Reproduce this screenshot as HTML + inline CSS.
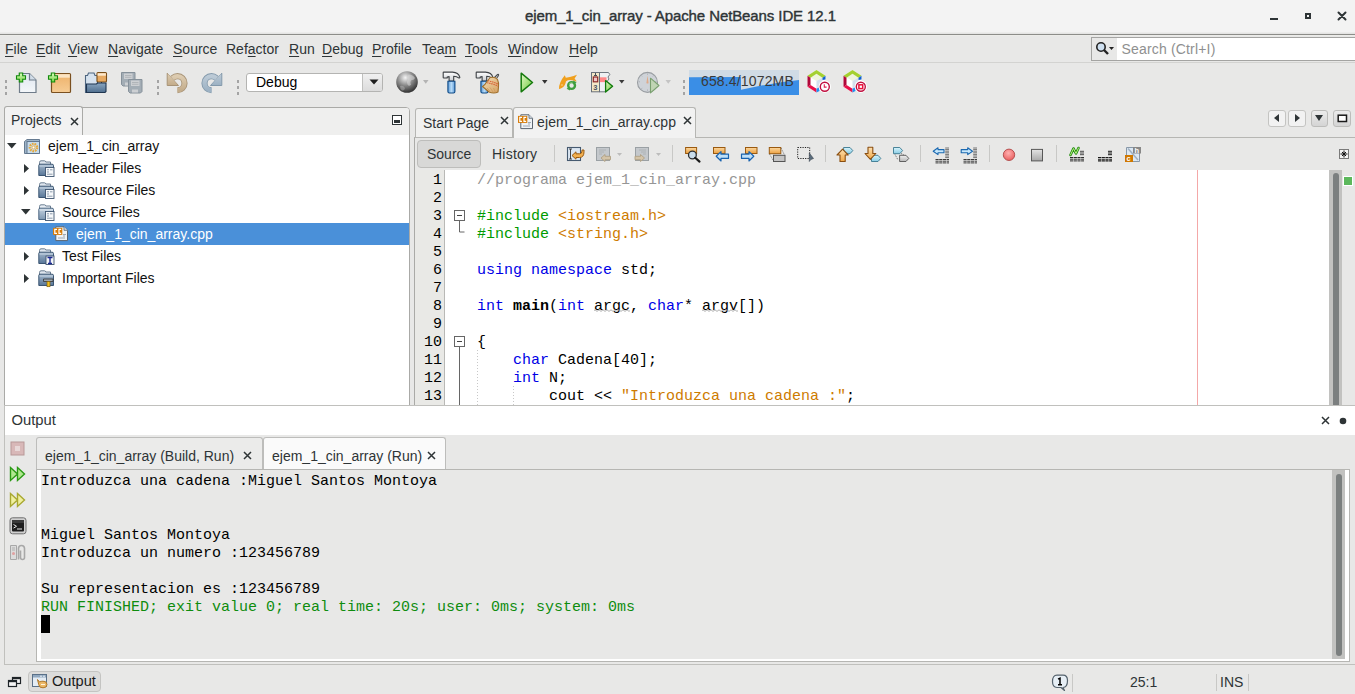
<!DOCTYPE html>
<html><head><meta charset="utf-8">
<style>
*{box-sizing:border-box}
html,body{margin:0;padding:0;width:1355px;height:694px;overflow:hidden;background:#e8e8e7;font-family:"Liberation Sans",sans-serif;color:#2e3436;position:relative}
.a{position:absolute;white-space:pre}
.mono{font-family:"Liberation Mono",monospace}
svg{position:absolute;overflow:visible}
#title{left:0;top:0;width:1355px;height:36px;background:linear-gradient(#f3f3f3 0 32px,#ececeb 32px 33px,#e4e4e3 33px 34px,#8c8d89 34px 35px,#ecece9 35px 36px)}
.menu{top:39px;font-size:14px;line-height:20px;color:#2e3436}
.u{text-decoration:underline;text-underline-offset:2px}
.tree{font-size:14px;line-height:22px;color:#111}
.code{font-family:"Liberation Mono",monospace;font-size:15px;line-height:18px;color:#000}
.ln{font-family:"Liberation Mono",monospace;font-size:15px;line-height:18px;color:#000;text-align:right;width:30px;left:412px}
.kw{color:#0000e6}.pp{color:#009b00}.st{color:#ce7b00}.cm{color:#969696}
.out{font-family:"Liberation Mono",monospace;font-size:15px;line-height:18px;color:#000}
.sep{width:1px;background:#c8c8c6}
.dots{width:2px;background:repeating-linear-gradient(#a4a4a4 0 3px,transparent 3px 6px)}
</style></head><body>
<!-- ===== title bar ===== -->
<div class="a" id="title"></div>
<div class="a" style="left:525px;top:6.5px;font-size:15px;line-height:18px;color:#2e3436;letter-spacing:-0.1px;-webkit-text-stroke:0.4px #2e3436">ejem_1_cin_array - Apache NetBeans IDE 12.1</div>
<svg style="left:1268px;top:10px" width="12" height="12"><rect x="2" y="8" width="8" height="2" fill="#2e3436"/></svg>
<svg style="left:1303px;top:11px" width="10" height="10"><rect x="3" y="3" width="4" height="4" fill="none" stroke="#2e3436" stroke-width="2"/></svg>
<svg style="left:1336px;top:10px" width="12" height="12"><path d="M2.5 2.5L9.5 9.5M9.5 2.5L2.5 9.5" stroke="#2e3436" stroke-width="2" stroke-linecap="round"/></svg>

<!-- ===== menu ===== -->
<div class="a menu" style="left:5px"><span class="u">F</span>ile</div>
<div class="a menu" style="left:36px"><span class="u">E</span>dit</div>
<div class="a menu" style="left:68px"><span class="u">V</span>iew</div>
<div class="a menu" style="left:108px"><span class="u">N</span>avigate</div>
<div class="a menu" style="left:173px"><span class="u">S</span>ource</div>
<div class="a menu" style="left:226px">Ref<span class="u">a</span>ctor</div>
<div class="a menu" style="left:289px"><span class="u">R</span>un</div>
<div class="a menu" style="left:322px"><span class="u">D</span>ebug</div>
<div class="a menu" style="left:372px"><span class="u">P</span>rofile</div>
<div class="a menu" style="left:422px">Tea<span class="u">m</span></div>
<div class="a menu" style="left:465px"><span class="u">T</span>ools</div>
<div class="a menu" style="left:508px"><span class="u">W</span>indow</div>
<div class="a menu" style="left:569px"><span class="u">H</span>elp</div>
<!-- search -->
<div class="a" style="left:1091px;top:37px;width:270px;height:24px;background:#fff;border:1px solid #a4a4a2"></div>
<div class="a" style="left:1092px;top:38px;width:25px;height:22px;background:#e8e8e7"></div>
<svg style="left:1095px;top:41px" width="22" height="16"><circle cx="6" cy="6" r="4.2" fill="#cfe0f0" stroke="#222" stroke-width="1.6"/><path d="M9 9L13 13" stroke="#222" stroke-width="2.4"/><path d="M14 6h5l-2.5 3z" fill="#222"/></svg>
<div class="a" style="left:1121.5px;top:40px;font-size:14px;line-height:18px;color:#8f9090;letter-spacing:0.17px">Search (Ctrl+I)</div>
<div class="a" style="left:0;top:62px;width:1355px;height:1px;background:#d3d3d1"></div>

<!-- ===== toolbar ===== -->
<div class="a dots" style="left:5px;top:80px;height:15px"></div>
<svg style="left:0;top:0" width="0" height="0"><defs>
<linearGradient id="gPlus" x1="0" y1="0" x2="0" y2="1"><stop offset="0" stop-color="#e0ffc0"/><stop offset="1" stop-color="#70d040"/></linearGradient>
<linearGradient id="gDoc" x1="0" y1="0" x2="0" y2="1"><stop offset="0" stop-color="#dfe6ef"/><stop offset="1" stop-color="#f4f7fa"/></linearGradient>
<linearGradient id="gBox" x1="0" y1="0" x2="0" y2="1"><stop offset="0" stop-color="#edb068"/><stop offset="1" stop-color="#f6cc94"/></linearGradient>
<linearGradient id="gFold" x1="0" y1="0" x2="0" y2="1"><stop offset="0" stop-color="#8aa6c0"/><stop offset="1" stop-color="#4f6e8e"/></linearGradient>
<linearGradient id="gRun" x1="0" y1="0" x2="1" y2="1"><stop offset="0" stop-color="#e4f8c8"/><stop offset="1" stop-color="#6cc83a"/></linearGradient>
<linearGradient id="gUndo" x1="0" y1="0" x2="0" y2="1"><stop offset="0" stop-color="#dccbb0"/><stop offset="1" stop-color="#c4ad8c"/></linearGradient>
<linearGradient id="gRedo" x1="0" y1="0" x2="0" y2="1"><stop offset="0" stop-color="#bccad6"/><stop offset="1" stop-color="#9db2c4"/></linearGradient>
<linearGradient id="gHandle" x1="0" y1="0" x2="1" y2="0"><stop offset="0" stop-color="#5c9ad8"/><stop offset="0.5" stop-color="#b8dcf8"/><stop offset="1" stop-color="#5c9ad8"/></linearGradient>
<radialGradient id="gl" cx="0.42" cy="0.3" r="0.72"><stop offset="0" stop-color="#f4f4f4"/><stop offset="0.5" stop-color="#8a8a8a"/><stop offset="1" stop-color="#2e2e2e"/></radialGradient>
</defs></svg>
<!-- new file -->
<svg style="left:16px;top:72px" width="22" height="22"><path d="M3.5 1.5h10l6.5 6.5v12.5h-16.5z" fill="url(#gDoc)" stroke="#6f7c8a" stroke-width="1.2"/><path d="M13.5 1.5v6.5h6.5" fill="#d2dde8" stroke="#6f7c8a" stroke-width="1.2"/><path d="M3.3 1h3.4v2.8h2.8v3.4h-2.8v2.8h-3.4v-2.8h-2.8v-3.4h2.8z" fill="url(#gPlus)" stroke="#128a0c" stroke-width="1.1"/></svg>
<!-- new project -->
<svg style="left:48px;top:72px" width="24" height="22"><rect x="3.5" y="1.5" width="19" height="19" rx="1" fill="url(#gBox)" stroke="#7a5020" stroke-width="1.2"/><rect x="4.2" y="2.2" width="17.6" height="3.5" fill="#fbe4c4"/><path d="M3.3 1h3.4v2.8h2.8v3.4h-2.8v2.8h-3.4v-2.8h-2.8v-3.4h2.8z" fill="url(#gPlus)" stroke="#128a0c" stroke-width="1.1"/></svg>
<!-- open project -->
<svg style="left:84px;top:71px" width="24" height="23"><path d="M1.5 4.5h2l1-2.5h5.5l1 2.5h2.5v17h-12z" fill="#d6e2ee" stroke="#4e6680" stroke-width="1.1"/><rect x="13" y="1.6" width="9.5" height="9.4" rx="1" fill="#e8aa62" stroke="#7a4e18" stroke-width="1.1"/><rect x="13.6" y="2.2" width="8.3" height="2.5" fill="#fde8cc"/><path d="M17.5 11v1.5" stroke="#333"/><path d="M2.5 21.5v-8.5h10l1-1h8.5v8.5l-1 1z" fill="url(#gFold)" stroke="#1f3550" stroke-width="1.1"/></svg>
<!-- save all -->
<svg style="left:120px;top:71px" width="24" height="23"><path d="M1.5 1.5h13.5v12l-1.5 1.5h-10.5l-1.5-1.5z" fill="#a3adb5" stroke="#86919a" stroke-width="1"/><rect x="4" y="2.5" width="8.5" height="5.5" fill="#cdd0d3"/><path d="M5 4.5h6.5M5 6.3h6.5" stroke="#a8adb2" stroke-width="0.8"/><rect x="5" y="11.5" width="6" height="3" fill="#cdd0d3"/><path d="M8.5 8.5h13.5v12l-1.5 1.5h-10.5l-1.5-1.5z" fill="#a3adb5" stroke="#86919a" stroke-width="1"/><rect x="11" y="9.5" width="8.5" height="5.5" fill="#cdd0d3"/><path d="M12 11.5h6.5M12 13.3h6.5" stroke="#a8adb2" stroke-width="0.8"/><rect x="12" y="18.5" width="6" height="3" fill="#cdd0d3"/></svg>
<div class="a dots" style="left:157px;top:80px;height:15px"></div>
<!-- undo -->
<svg style="left:166px;top:72px" width="23" height="22"><path d="M6.5 6.2 Q9 4.2 11.5 4.2 A7 7 0 0 1 11.5 18.2" fill="none" stroke="#a89478" stroke-width="6.2"/><path d="M1.2 1.2 L1.2 13.5 L12.5 13.5z" fill="url(#gUndo)" stroke="#a89478" stroke-width="1"/><path d="M6.5 6.2 Q9 4.2 11.5 4.2 A7 7 0 0 1 11.5 18.2" fill="none" stroke="url(#gUndo)" stroke-width="4.4"/><path d="M2 2 L2 12.8 L11.5 12.8z" fill="url(#gUndo)"/></svg>
<!-- redo -->
<svg style="left:200px;top:72px" width="23" height="22"><g transform="translate(23,0) scale(-1,1)"><path d="M6.5 6.2 Q9 4.2 11.5 4.2 A7 7 0 0 1 11.5 18.2" fill="none" stroke="#8399ab" stroke-width="6.2"/><path d="M1.2 1.2 L1.2 13.5 L12.5 13.5z" fill="url(#gRedo)" stroke="#8399ab" stroke-width="1"/><path d="M6.5 6.2 Q9 4.2 11.5 4.2 A7 7 0 0 1 11.5 18.2" fill="none" stroke="url(#gRedo)" stroke-width="4.4"/><path d="M2 2 L2 12.8 L11.5 12.8z" fill="url(#gRedo)"/></g></svg>
<div class="a dots" style="left:237px;top:80px;height:15px"></div>
<!-- combo -->
<div class="a" style="left:246px;top:73px;width:137px;height:19px;background:#fff;border:1px solid #b4b4b2;border-radius:3px"></div>
<div class="a" style="left:362px;top:74px;width:20px;height:17px;background:linear-gradient(#f0f0f0,#dcdcdc);border-left:1px solid #c0c0be;border-radius:0 2px 2px 0"></div>
<svg style="left:369px;top:79px" width="10" height="7"><path d="M0.5 0.5h9l-4.5 5z" fill="#1f1f1f"/></svg>
<div class="a" style="left:256px;top:73px;font-size:14px;line-height:18px;color:#000">Debug</div>
<!-- globe -->
<svg style="left:396px;top:71px" width="34" height="23"><circle cx="11" cy="11" r="10.8" fill="url(#gl)"/><path d="M12.5 3.5 Q17 3.8 19 7 Q18 9.5 15.5 9 Q13.5 11 15 13.5 Q13 16 11.5 13.5 Q10.5 10 12 8.5 Q11 6 12.5 3.5z" fill="#d8d8d8" opacity="0.55"/><path d="M4 15 Q7 14 9 17 Q8.5 20 6 19.5 Q4 18 4 15z" fill="#c8c8c8" opacity="0.4"/><path d="M27 9h5.5l-2.75 3.8z" fill="#b4b4b4"/></svg>
<!-- hammer -->
<svg style="left:0;top:0" width="0" height="0"><defs><linearGradient id="gHead" x1="0" y1="0" x2="0" y2="1"><stop offset="0" stop-color="#ffffff"/><stop offset="1" stop-color="#c8ccd0"/></linearGradient><linearGradient id="gBroom" x1="0" y1="0" x2="1" y2="1"><stop offset="0" stop-color="#f4e0b8"/><stop offset="1" stop-color="#d4a060"/></linearGradient></defs></svg>
<svg style="left:440px;top:68px" width="22" height="27"><path d="M3.2 4.6 Q3.2 4.1 3.8 4.1 L12.5 4.1 Q18.5 4.3 19.9 9.4 L19.1 10.1 Q16.5 8.2 13.7 8.2 L13.7 13 L9.1 13 L9.1 8.6 L7.2 9.1 L7.2 10 L3.8 10 Q3.2 10 3.2 9.4z" fill="url(#gHead)" stroke="#3c4044" stroke-width="1.1" stroke-linejoin="round"/><path d="M7.9 13.2 H14.9 V23.5 Q14.9 25 13.4 25 H9.4 Q7.9 25 7.9 23.5z" fill="url(#gHandle)" stroke="#0f4a86" stroke-width="1.1"/></svg>
<!-- clean build -->
<svg style="left:473px;top:68px" width="30" height="27"><path d="M3.2 4.6 Q3.2 4.1 3.8 4.1 L12.5 4.1 Q18.5 4.3 19.9 9.4 L19.1 10.1 Q16.5 8.2 13.7 8.2 L13.7 13 L9.1 13 L9.1 8.6 L7.2 9.1 L7.2 10 L3.8 10 Q3.2 10 3.2 9.4z" fill="url(#gHead)" stroke="#3c4044" stroke-width="1.1" stroke-linejoin="round"/><path d="M7.9 13.2 H14.9 V23.5 Q14.9 25 13.4 25 H9.4 Q7.9 25 7.9 23.5z" fill="url(#gHandle)" stroke="#0f4a86" stroke-width="1.1"/><path d="M21.5 9.5 L24.5 6.5 Q26 6 25.5 7.5 L23.5 10.5" fill="none" stroke="#4a4e52" stroke-width="1.1"/><path d="M17.2 9.5 Q22 8.5 24.5 11.5 Q26 14.5 25.5 19 L25 24 Q21 26 16 24 L9.5 18.5 Q12 17 14 13.5z" fill="url(#gBroom)" stroke="#a0702c" stroke-width="1.1" stroke-linejoin="round"/><path d="M15 12.8 Q20 13.5 25 16.2 M14.2 14.8 Q19.5 15.5 25.3 18.2" stroke="#d85a30" stroke-width="1.1" fill="none" stroke-dasharray="1.4 0.8"/><path d="M14 20 L17 23 M17 19.5 L20 24 M20.5 20 L22.5 24.5" stroke="#c89050" stroke-width="0.6"/></svg>
<!-- run -->
<svg style="left:519px;top:72px" width="32" height="22"><path d="M2.2 1.2 L13.5 10.5 L2.2 19.8z" fill="url(#gRun)" stroke="#167a0e" stroke-width="1.5" stroke-linejoin="round"/><path d="M23 8h5.5l-2.75 3.8z" fill="#333"/></svg>
<!-- reload fish -->
<svg style="left:555px;top:70px" width="24" height="22"><path d="M4 18.8 Q3.8 12.5 9.8 5.2 L10.8 7.8 Q15 7 18.5 6 L22 4.8 L19.6 8.5 L21.8 11.6 Q17 9.6 12.8 10.2 Q10.2 11.2 10.6 13 Q9.5 17.5 4.5 19z" fill="#f0a01e"/><circle cx="7" cy="15" r="0.8" fill="#f8d8a0"/><circle cx="16.6" cy="15.5" r="3.4" fill="none" stroke="#3e9e3e" stroke-width="2.4"/><path d="M18.2 10.6 L21.6 12.2 L18.4 14.4z M15 20.4 L11.6 18.8 L14.8 16.6z" fill="#3e9e3e"/><path d="M14.2 14 Q15.5 12.5 17.5 12.9" stroke="#a8e0a0" stroke-width="0.8" fill="none"/></svg>
<!-- debug -->
<svg style="left:590px;top:71px" width="36" height="23"><path d="M9.4 1.5 H18.5 L19.8 3.5 L18 6 L19 8 L17 10.5 V14 L16 17 L16.8 19 L15 20.8 H9.4z" fill="#eef0f2" stroke="#707880" stroke-width="1"/><rect x="10" y="6.3" width="6.5" height="4.8" fill="#f88"/><rect x="1.5" y="1.5" width="8" height="19.3" fill="#f2e8c8" stroke="#68707a" stroke-width="1"/><path d="M5.5 2 V4.5 M4 4.5 H7" stroke="#4a525a" stroke-width="1"/><rect x="3.3" y="6" width="4.4" height="4.8" fill="#f0c8c8" stroke="#8a2a2a" stroke-width="1.2"/><text x="3.2" y="18.6" font-size="7.5" font-family="Liberation Sans" font-weight="bold" fill="#4a5260">3</text><path d="M15.6 9.6 L22.6 15.3 L15.6 21z" fill="url(#gRun)" stroke="#0e7a0a" stroke-width="1.3" stroke-linejoin="round"/><path d="M29 9h5.5l-2.75 3.6z" fill="#3a3a3a"/></svg>
<!-- profile -->
<svg style="left:636px;top:71px" width="38" height="23"><circle cx="11.5" cy="11.4" r="10" fill="#cfd3d8" stroke="#9a9ea2" stroke-width="1.1"/><path d="M11.5 2.5v1.3M17.5 4.5l-0.7 0.9M20.3 10.8h-1.3M17.5 17.8l-0.7-0.9M11.5 19.8v-1.3M5.5 17.8l0.7-0.9M2.7 10.8h1.3M5.5 4.5l0.7 0.9" stroke="#a0a4a8" stroke-width="0.7"/><path d="M11.5 4.5 L12.6 12 Q11.5 13 10.4 12z" fill="#e0aa88"/><path d="M14.5 7.2 L23 14.5 L14.5 21.8z" fill="#c0d4b4" stroke="#7aa070" stroke-width="1.1" stroke-linejoin="round"/><path d="M29.5 9h5.5l-2.75 3.8z" fill="#c4c4c4"/></svg>
<div class="a dots" style="left:683px;top:80px;height:15px"></div>
<!-- memory -->
<svg style="left:689px;top:70px" width="110" height="25"><rect width="110" height="25" fill="#3a8ee6"/><path d="M0 0H110V10 Q90 12 70 16 L52 19.8 V7 L0 7.2z" fill="#d0dbe5"/></svg>
<div class="a" style="left:701px;top:72px;font-size:14px;line-height:18px;color:#3a3a3a;letter-spacing:0.15px">658.4/1072MB</div>
<!-- nb icons -->
<svg style="left:807px;top:69px" width="28" height="26"><path d="M9.5 1 L18.5 6.8 L18.5 17.8 L9.5 23.5 L0.5 17.8 L0.5 6.8z" fill="#fff"/><path d="M9.5 4.8 L15.5 8.4 L9.5 12 L3.5 8.4z" fill="#eef4dc"/><path d="M15.5 8.4 L15.5 16 L9.5 19.7 L9.5 12z" fill="#d4e0ec"/><path d="M0.5 6.8 L9.5 1 L18.5 6.8 L15.5 8.8 L9.5 4.8 L3.5 8.8z" fill="#a4d030"/><path d="M0.5 6.8 L3.5 8.8 L3.5 16 L0.5 17.8z" fill="#b0083a"/><path d="M0.5 17.8 L3.5 16 L9.5 19.7 L9.5 23.5z" fill="#e8104a"/><path d="M18.5 6.8 L18.5 10.5 L15.5 11 L15.5 8.8z" fill="#1060d0"/><path d="M9.5 19.7 L12.5 18 L12.5 22 L9.5 23.5z" fill="#2090f0"/><circle cx="17.8" cy="17.7" r="6.2" fill="#fff"/><circle cx="17.8" cy="17.7" r="4.5" fill="#fff" stroke="#c01040" stroke-width="1.4"/><path d="M17.3 15.2v2.9h2.3" fill="none" stroke="#e02050" stroke-width="1.1"/></svg>
<svg style="left:843px;top:69px" width="28" height="26"><path d="M9.5 1 L18.5 6.8 L18.5 17.8 L9.5 23.5 L0.5 17.8 L0.5 6.8z" fill="#fff"/><path d="M9.5 4.8 L15.5 8.4 L9.5 12 L3.5 8.4z" fill="#eef4dc"/><path d="M15.5 8.4 L15.5 16 L9.5 19.7 L9.5 12z" fill="#d4e0ec"/><path d="M0.5 6.8 L9.5 1 L18.5 6.8 L15.5 8.8 L9.5 4.8 L3.5 8.8z" fill="#a4d030"/><path d="M0.5 6.8 L3.5 8.8 L3.5 16 L0.5 17.8z" fill="#b0083a"/><path d="M0.5 17.8 L3.5 16 L9.5 19.7 L9.5 23.5z" fill="#e8104a"/><path d="M18.5 6.8 L18.5 10.5 L15.5 11 L15.5 8.8z" fill="#1060d0"/><path d="M9.5 19.7 L12.5 18 L12.5 22 L9.5 23.5z" fill="#2090f0"/><circle cx="17.8" cy="17.7" r="6.2" fill="#fff"/><circle cx="17.8" cy="17.7" r="4.5" fill="#fff" stroke="#c01040" stroke-width="1.4"/><rect x="15.9" y="15.8" width="3.8" height="3.8" fill="#fff" stroke="#e8103a" stroke-width="1.5"/></svg>

<!-- ===== projects panel ===== -->
<div class="a" style="left:4px;top:107px;width:406px;height:299px;background:#fff;border:1px solid #aaaaa7;border-radius:4px 4px 0 0"></div>
<div class="a" style="left:5px;top:108px;width:404px;height:27px;background:#efefee;border-radius:3px 3px 0 0"></div>
<div class="a" style="left:4px;top:106px;width:79px;height:29px;background:#f2f2f2;border:1px solid #aaaaa7;border-bottom:none;border-radius:3px 3px 0 0"></div>
<div class="a" style="left:11px;top:111px;font-size:14px;line-height:18px;color:#2e3436">Projects</div>
<svg style="left:70px;top:116.5px" width="10" height="10"><path d="M1 1L8 8M8 1L1 8" stroke="#2e3436" stroke-width="1.5"/></svg>
<svg style="left:391px;top:114px" width="12" height="12"><rect x="1.5" y="1.5" width="9" height="9" fill="#fff" stroke="#2e3436"/><rect x="3" y="6" width="6" height="3" fill="#2e3436"/></svg>
<!-- tree -->
<svg style="left:0;top:0" width="0" height="0"><defs>
<linearGradient id="gFd" x1="0" y1="0" x2="0" y2="1"><stop offset="0" stop-color="#a4b8cc"/><stop offset="1" stop-color="#587698"/></linearGradient>
<linearGradient id="gFdL" x1="0" y1="0" x2="0" y2="1"><stop offset="0" stop-color="#c4d2e0"/><stop offset="1" stop-color="#7f98b2"/></linearGradient>
<symbol id="fold" viewBox="0 0 17 17"><path d="M1.5 2.5 Q1.5 0.8 3 0.8 H6.5 Q7.5 0.8 7.8 2 H12.5 V6 H1.5z" fill="#dfe6ee" stroke="#5f7388" stroke-width="0.9"/><path d="M0.8 15.5 V5.5 Q0.8 4.2 2 4.2 H14 Q15.5 4.2 15.5 5.5 V15.5z" fill="url(#gFd)" stroke="#2e4a68" stroke-width="0.9"/><path d="M1.5 6 H15" stroke="#c8d6e4" stroke-width="1"/></symbol>
<symbol id="foldo" viewBox="0 0 17 17"><path d="M1.5 2.5 Q1.5 0.8 3 0.8 H6.5 Q7.5 0.8 7.8 2 H12.5 V6 H1.5z" fill="#e8eef4" stroke="#5f7388" stroke-width="0.9"/><path d="M0.8 15.5 V5.5 Q0.8 4.2 2 4.2 H14 Q15.5 4.2 15.5 5.5 V15.5z" fill="url(#gFdL)" stroke="#3e5a78" stroke-width="0.9"/><path d="M1.5 6 H15" stroke="#e0e8f0" stroke-width="1"/></symbol>
<symbol id="docl" viewBox="0 0 17 17"><rect x="7.5" y="7.5" width="8.5" height="9" fill="#f6f8fa" stroke="#3e5470" stroke-width="0.9"/><path d="M9 9.8h2M12 9.8h2.5M9 12h2M9 14.2h5.5" stroke="#8090a4" stroke-width="0.9"/></symbol>
<symbol id="ccdoc" viewBox="0 0 16 16"><path d="M2.8 0.8 H11 L14.5 4.3 V14.6 H2.8z" fill="#eef2f6" stroke="#5a6470" stroke-width="1"/><path d="M11 0.8 V4.3 H14.5" fill="#d4dce4" stroke="#5a6470" stroke-width="0.8"/><path d="M10 8.5h3M10 10h2M5 12h7" stroke="#8a96a4" stroke-width="0.8"/><rect x="0" y="1.9" width="9.3" height="7" fill="#d87c08"/><path d="M4 3.3 H1.8 V7.4 H4 M8.2 3.3 H6 V7.4 H8.2" fill="none" stroke="#fff" stroke-width="1.2"/></symbol>
</defs></svg>
<div class="a" style="left:5px;top:223px;width:404px;height:22px;background:#4a90d9"></div>
<svg style="left:7px;top:143px" width="10" height="7"><path d="M0 0h9.5l-4.75 5.5z" fill="#2e3436"/></svg>
<svg style="left:24px;top:139px" width="17" height="15"><path d="M0.5 2.5 L3 0.5 H15.5 V12.5 L13 14.5 H0.5z" fill="#9fb4c8" stroke="#5a7088" stroke-width="0.9"/><rect x="3" y="2.5" width="12.5" height="12" fill="#c6dbec" stroke="#5a7088" stroke-width="0.9"/><circle cx="9.5" cy="8.5" r="3.6" fill="none" stroke="#e8a838" stroke-width="2.4" stroke-dasharray="1.6 0.9"/><circle cx="9.5" cy="8.5" r="1.4" fill="#fff" stroke="#e8a838" stroke-width="0.8"/></svg>
<div class="a tree" style="left:48px;top:135px">ejem_1_cin_array</div>

<svg style="left:24px;top:164px" width="6" height="10"><path d="M0 0v9l5-4.5z" fill="#2e3436"/></svg>
<svg style="left:38px;top:160px" width="17" height="17"><use href="#fold"/><use href="#docl"/></svg>
<div class="a tree" style="left:62px;top:157px">Header Files</div>

<svg style="left:24px;top:186px" width="6" height="10"><path d="M0 0v9l5-4.5z" fill="#2e3436"/></svg>
<svg style="left:38px;top:182px" width="17" height="17"><use href="#fold"/><use href="#docl"/></svg>
<div class="a tree" style="left:62px;top:179px">Resource Files</div>

<svg style="left:21px;top:209px" width="11" height="7"><path d="M0 0h9.5l-4.75 5.5z" fill="#2e3436"/></svg>
<svg style="left:38px;top:204px" width="17" height="17"><use href="#foldo"/><use href="#docl"/></svg>
<div class="a tree" style="left:62px;top:201px">Source Files</div>

<svg style="left:53px;top:226px" width="16" height="16"><use href="#ccdoc"/></svg>
<div class="a tree" style="left:76px;top:223px;color:#fff">ejem_1_cin_array.cpp</div>

<svg style="left:24px;top:252px" width="6" height="10"><path d="M0 0v9l5-4.5z" fill="#2e3436"/></svg>
<svg style="left:38px;top:248px" width="17" height="17"><use href="#fold"/><rect x="8" y="8" width="8" height="8.5" fill="#f4f6f8" stroke="#3e5470" stroke-width="0.9"/><path d="M9.5 9.5h5M12 9.5v6M10 15.5h4" stroke="#1a2890" stroke-width="1.4"/></svg>
<div class="a tree" style="left:62px;top:245px">Test Files</div>

<svg style="left:24px;top:274px" width="6" height="10"><path d="M0 0v9l5-4.5z" fill="#2e3436"/></svg>
<svg style="left:38px;top:270px" width="17" height="17"><use href="#fold"/><path d="M5.5 9 H15 V11.5 H5.5z" fill="#9ea8b2" stroke="#333" stroke-width="0.8"/><rect x="9" y="11.5" width="3" height="5.2" fill="#f0c020" stroke="#806010" stroke-width="0.7"/></svg>
<div class="a tree" style="left:62px;top:267px">Important Files</div>

<!-- ===== editor ===== -->
<div class="a" style="left:414px;top:137px;width:941px;height:269px;background:#e8e8e7;border-left:1px solid #aaaaa7;border-top:1px solid #b6b6b3"></div>
<!-- tabs -->
<div class="a" style="left:415px;top:108px;width:98px;height:29px;background:#f0f0ef;border:1px solid #b6b6b3;border-bottom:none;border-radius:3px 3px 0 0"></div>
<div class="a" style="left:423px;top:114px;font-size:14px;line-height:18px;color:#2e3436">Start Page</div>
<svg style="left:500px;top:116px" width="10" height="10"><path d="M1 1L8 8M8 1L1 8" stroke="#2e3436" stroke-width="1.5"/></svg>
<div class="a" style="left:513px;top:107px;width:183px;height:31px;background:#f2f2f2;border:1px solid #b6b6b3;border-bottom:none;border-radius:3px 3px 0 0"></div>
<svg style="left:517.5px;top:114px" width="16" height="16"><use href="#ccdoc"/></svg>
<div class="a" style="left:537px;top:113px;font-size:14px;line-height:18px;color:#2e3436;letter-spacing:0.12px">ejem_1_cin_array.cpp</div>
<svg style="left:683px;top:116px" width="10" height="10"><path d="M1 1L8 8M8 1L1 8" stroke="#2e3436" stroke-width="1.5"/></svg>
<!-- tab nav buttons -->
<div class="a" style="left:1268px;top:110px;width:18px;height:17px;background:#f2f2f2;border:1px solid #c4c4c2;border-radius:3px"></div>
<svg style="left:1273px;top:114px" width="8" height="9"><path d="M6 0v8l-5-4z" fill="#2e3436"/></svg>
<div class="a" style="left:1288px;top:110px;width:18px;height:17px;background:#f2f2f2;border:1px solid #c4c4c2;border-radius:3px"></div>
<svg style="left:1294px;top:114px" width="8" height="9"><path d="M1 0v8l5-4z" fill="#2e3436"/></svg>
<div class="a" style="left:1311px;top:110px;width:17px;height:17px;background:linear-gradient(#ececec,#d4d4d4);border:1px solid #bcbcba;border-radius:3px"></div>
<svg style="left:1315px;top:115px" width="10" height="8"><path d="M0 0h8l-4 6z" fill="#2e3436"/></svg>
<div class="a" style="left:1333px;top:110px;width:18px;height:17px;background:linear-gradient(#ececec,#d4d4d4);border:1px solid #bcbcba;border-radius:3px"></div>
<svg style="left:1337px;top:114px" width="11" height="9"><rect x="1.2" y="1.2" width="8.3" height="6.3" fill="#fff" stroke="#1a1a1a" stroke-width="1.5"/></svg>
<!-- editor toolbar -->
<div class="a" style="left:417px;top:140px;width:64px;height:28px;background:#d8d8d7;border:1px solid #bdbdbb;border-radius:4px"></div>
<div class="a" style="left:427px;top:145px;font-size:14px;line-height:18px;color:#2e3436">Source</div>
<div class="a" style="left:492px;top:145px;letter-spacing:0.25px;font-size:14px;line-height:18px;color:#2e3436">History</div>
<div class="a sep" style="left:554px;top:145px;height:17px"></div>
<div class="a sep" style="left:672px;top:145px;height:17px"></div>
<div class="a sep" style="left:825px;top:145px;height:17px"></div>
<div class="a sep" style="left:920px;top:145px;height:17px"></div>
<div class="a sep" style="left:989px;top:145px;height:17px"></div>
<div class="a sep" style="left:1056px;top:145px;height:17px"></div>
<!-- editor toolbar icons -->
<svg style="left:566px;top:146px" width="20" height="17"><rect x="1.5" y="1.5" width="13" height="13" fill="#dbe6f2" stroke="#465a70" stroke-width="1.1"/><path d="M3 3h3M4.5 3v10M3 13h3" stroke="#333" stroke-width="0.9"/><path d="M6 9.5 L10 5.8 V7.8 H13.5 Q16 7.8 16 5 V4 H18 V5.8 Q18 11.5 13.5 11.5 H10 V13.2z" fill="#f2b050" stroke="#9a5a10" stroke-width="1"/></svg>
<svg style="left:595px;top:146px" width="30" height="17"><rect x="1.5" y="1.5" width="13" height="13" fill="#c4c8cc" stroke="#9aa0a4" stroke-width="1"/><path d="M4 4h7M4 6h5M4 8h3" stroke="#a8acb0" stroke-width="0.8"/><path d="M6 12 L10 8.5 V10.3 H15.5 V13.7 H10 V15.5z" fill="#d4c4a8" stroke="#b0a084" stroke-width="0.9"/><path d="M22 7h5l-2.5 3z" fill="#bcbcbc"/></svg>
<svg style="left:634px;top:146px" width="30" height="17"><rect x="1.5" y="1.5" width="13" height="13" fill="#c4c8cc" stroke="#9aa0a4" stroke-width="1"/><path d="M5 4h7M7 6h5M9 8h3" stroke="#a8acb0" stroke-width="0.8"/><path d="M10.5 12 L6.5 8.5 V10.3 H1 V13.7 H6.5 V15.5z" fill="#d4c4a8" stroke="#b0a084" stroke-width="0.9"/><path d="M22 7h5l-2.5 3z" fill="#bcbcbc"/></svg>
<svg style="left:684px;top:146px" width="20" height="18"><defs><linearGradient id="gOr" x1="0" y1="0" x2="0" y2="1"><stop offset="0" stop-color="#fcd8a0"/><stop offset="1" stop-color="#eca040"/></linearGradient></defs><rect x="1.6" y="1.5" width="11" height="6" fill="url(#gOr)" stroke="#9a5a10" stroke-width="1"/><circle cx="8.4" cy="9" r="3.9" fill="#c8dcec" stroke="#2a2e32" stroke-width="1.3"/><path d="M11.2 11.8 L15.5 15.6" stroke="#1a1a1a" stroke-width="2.2" stroke-linecap="round"/></svg>
<svg style="left:712px;top:146px" width="20" height="18"><rect x="1.5" y="1.5" width="11.5" height="6" fill="url(#gOr)" stroke="#9a5a10" stroke-width="1"/><path d="M4.2 10.3 L9 5.6 V8.2 H16.5 V12.4 H9 V15z" fill="#c0e0f8" stroke="#1a64b0" stroke-width="1.2" stroke-linejoin="round"/></svg>
<svg style="left:740px;top:146px" width="20" height="18"><rect x="5.5" y="1.5" width="11.5" height="6" fill="url(#gOr)" stroke="#9a5a10" stroke-width="1"/><path d="M13.8 10.3 L9 5.6 V8.2 H1.5 V12.4 H9 V15z" fill="#c0e0f8" stroke="#1a64b0" stroke-width="1.2" stroke-linejoin="round"/></svg>
<svg style="left:767px;top:146px" width="20" height="18"><rect x="2.3" y="1.5" width="11.5" height="6.2" fill="url(#gOr)" stroke="#9a5a10" stroke-width="1"/><rect x="6.5" y="9.3" width="11.5" height="6.2" fill="#c4c4c4" stroke="#555" stroke-width="1"/><path d="M14 2 L17.5 9 M2.5 8 L6 14" stroke="#555" stroke-width="0.8" stroke-dasharray="1 1"/></svg>
<svg style="left:795px;top:146px" width="20" height="18"><rect x="2.7" y="1.5" width="12" height="11" fill="none" stroke="#222" stroke-width="1" stroke-dasharray="1.2 1.2"/><path d="M14.3 7 V15.5 L15.8 13.5 L18.5 12.5z" fill="#5a6c7c" stroke="#3a4450" stroke-width="0.6"/></svg>
<svg style="left:835px;top:146px" width="20" height="18"><defs><linearGradient id="gTag" x1="0" y1="0" x2="0" y2="1"><stop offset="0" stop-color="#d8f4fc"/><stop offset="1" stop-color="#88cce4"/></linearGradient><linearGradient id="gTagG" x1="0" y1="0" x2="0" y2="1"><stop offset="0" stop-color="#f0f0f0"/><stop offset="1" stop-color="#b8b8b8"/></linearGradient><linearGradient id="gArr" x1="0" y1="0" x2="0" y2="1"><stop offset="0" stop-color="#fde0b0"/><stop offset="1" stop-color="#f0a848"/></linearGradient></defs><path d="M8.6 1.5 H15 L17.8 4.6 L15 7.7 H8.6z" fill="url(#gTag)" stroke="#3a7890" stroke-width="0.9"/><path d="M7.6 3.2 L13.2 9 H10.2 V15.5 H5 V9 H2z" fill="url(#gArr)" stroke="#8a4e10" stroke-width="1.1" stroke-linejoin="round"/></svg>
<svg style="left:864px;top:146px" width="20" height="18"><path d="M7.5 9.3 H14 L16.8 12.4 L14 15.5 H7.5z" fill="url(#gTag)" stroke="#3a7890" stroke-width="0.9"/><path d="M6.4 13.3 L11.8 7.5 H8.8 V1.3 H4 V7.5 H1z" fill="url(#gArr)" stroke="#8a4e10" stroke-width="1.1" stroke-linejoin="round"/></svg>
<svg style="left:892px;top:146px" width="20" height="18"><path d="M1.5 1.5 H7.8 L10.6 4.6 L7.8 7.7 H1.5z" fill="url(#gTag)" stroke="#3a7890" stroke-width="0.9"/><path d="M7.6 9.3 H14 L16.8 12.4 L14 15.5 H7.6z" fill="url(#gTagG)" stroke="#555" stroke-width="0.9"/><path d="M3 8.5 L6 14 M9 7.5 L12 9" stroke="#444" stroke-width="0.8" stroke-dasharray="1 1"/></svg>
<svg style="left:932px;top:146px" width="20" height="18"><path d="M1.2 5.2 L6 1.8 V3.6 H12 V6.8 H6 V8.6z" fill="#c8e8fc" stroke="#1a68b0" stroke-width="1.1" stroke-linejoin="round"/><path d="M13.2 2h3.8M13.2 3.6h3.8M13.2 5.2h3.8M13.2 6.8h3.8M13.2 8.4h3.8M13.2 10h3.8M13.2 11.6h3.8" stroke="#666" stroke-width="0.9"/><path d="M3.5 13.5h13.5M3.5 15.2h13.5M3.5 16.9h13.5" stroke="#3a3a3a" stroke-width="1" stroke-dasharray="3.2 0.5"/></svg>
<svg style="left:960px;top:146px" width="20" height="18"><path d="M12.5 5.2 L7.7 1.8 V3.6 H1.2 V6.8 H7.7 V8.6z" fill="#c8e8fc" stroke="#1a68b0" stroke-width="1.1" stroke-linejoin="round"/><path d="M13.2 2h3.8M13.2 3.6h3.8M13.2 5.2h3.8M13.2 6.8h3.8M13.2 8.4h3.8M13.2 10h3.8M13.2 11.6h3.8" stroke="#666" stroke-width="0.9"/><path d="M3.5 13.5h13.5M3.5 15.2h13.5M3.5 16.9h13.5" stroke="#3a3a3a" stroke-width="1" stroke-dasharray="3.2 0.5"/></svg>
<svg style="left:1002px;top:148px" width="14" height="14"><defs><radialGradient id="gRec" cx="0.45" cy="0.35" r="0.7"><stop offset="0" stop-color="#ffb0b0"/><stop offset="1" stop-color="#e85a5a"/></radialGradient><linearGradient id="gStop" x1="0" y1="0" x2="0" y2="1"><stop offset="0" stop-color="#e4e4e4"/><stop offset="1" stop-color="#a8a8a8"/></linearGradient></defs><circle cx="7" cy="6.8" r="5.7" fill="url(#gRec)" stroke="#b04848" stroke-width="0.9"/></svg>
<svg style="left:1030px;top:148px" width="14" height="14"><rect x="1.5" y="1.4" width="11" height="11.5" fill="url(#gStop)" stroke="#585858" stroke-width="1"/></svg>
<svg style="left:1069px;top:146px" width="18" height="18"><path d="M1.5 9 L4.5 2.5 L7 7.5 L9.5 2" fill="none" stroke="#208a10" stroke-width="2.6" stroke-linejoin="round" stroke-linecap="round"/><path d="M1.5 9 L4.5 2.5 L7 7.5 L9.5 2" fill="none" stroke="#b8f080" stroke-width="1" stroke-linejoin="round" stroke-linecap="round"/><path d="M11 5.3h4M11 7h4M11 8.7h4" stroke="#3a3a3a" stroke-width="0.9"/><path d="M1 11.5h14M1 13.2h14M1 14.9h14" stroke="#2a2a2a" stroke-width="1" stroke-dasharray="3.2 0.5"/></svg>
<svg style="left:1097px;top:146px" width="18" height="18"><path d="M11 5.3h4M11 7h4M11 8.7h4" stroke="#1a1a1a" stroke-width="1"/><path d="M1 11.5h14M1 13.2h14M1 14.9h14" stroke="#1a1a1a" stroke-width="1.1" stroke-dasharray="3.2 0.5"/></svg>
<svg style="left:1124px;top:146px" width="20" height="18"><path d="M2.5 1.5 H10 L15.5 7 V15.5 H2.5z" fill="#dce8f4" stroke="#8898a8" stroke-width="1"/><path d="M4 2.5 L14 14" stroke="#a0b0c0" stroke-width="1.5"/><rect x="9" y="1" width="8" height="6.5" fill="#888"/><text x="10.6" y="6.9" font-size="7.5" font-family="Liberation Sans" font-weight="bold" fill="#fff">h</text><rect x="1" y="9" width="8" height="7" fill="#d07800"/><text x="2.6" y="14.6" font-size="7.5" font-family="Liberation Sans" font-weight="bold" fill="#fff">c</text></svg>
<svg style="left:1339px;top:149px" width="10" height="10"><rect x="0.5" y="0.5" width="9" height="9" fill="#f4f4f4" stroke="#7a7a7a" stroke-width="1"/><path d="M5 1.5v7M1.5 5h7" stroke="#111" stroke-width="1"/><path d="M3 3l4 4M7 3l-4 4" stroke="#111" stroke-width="1"/></svg>

<!-- editor body -->
<div class="a" style="left:415px;top:170px;width:914px;height:235px;background:#fff"></div>
<div class="a" style="left:415px;top:170px;width:30px;height:235px;background:#e9e9e6;border-right:1px solid #b9b9b6"></div>
<div class="a" style="left:1197px;top:170px;width:1px;height:235px;background:#f4a8a8"></div>
<div class="a" style="left:1329px;top:170px;width:13px;height:235px;background:#c2c2c0"></div>
<div class="a" style="left:1333px;top:173px;width:6px;height:240px;background:#7b7f7f;border-radius:3px"></div>
<div class="a" style="left:1343px;top:176px;width:10px;height:10px;background:#fff"></div>
<div class="a" style="left:1344px;top:177px;width:8px;height:8px;background:#5cb85c"></div>
<div class="a" style="left:415px;top:405px;width:940px;height:1px;background:#b6b6b3"></div>
<!-- line numbers -->
<div class="a ln" style="top:172px">1
2
3
4
5
6
7
8
9
10
11
12
13</div>
<!-- folds -->
<svg style="left:450px;top:170px" width="20" height="235"><rect x="4.5" y="40.5" width="10" height="10" fill="#fff" stroke="#666"/><path d="M7 45.5h5" stroke="#444"/><path d="M9.5 51v11h5" fill="none" stroke="#666"/><rect x="4.5" y="166.5" width="10" height="10" fill="#fff" stroke="#666"/><path d="M7 171.5h5" stroke="#444"/><path d="M9.5 177v60" stroke="#666"/></svg>
<div class="a" style="left:477px;top:350px;width:1px;height:55px;background:repeating-linear-gradient(#c8c8c8 0 1px,transparent 1px 3px)"></div>
<div class="a" style="left:513px;top:386px;width:1px;height:19px;background:repeating-linear-gradient(#c8c8c8 0 1px,transparent 1px 3px)"></div>
<!-- code -->
<div class="a code" style="left:477px;top:172px"><span class="cm">//programa ejem_1_cin_array.cpp</span>

<span class="pp">#include</span> <span class="st">&lt;iostream.h&gt;</span>
<span class="pp">#include</span> <span class="st">&lt;string.h&gt;</span>

<span class="kw">using</span> <span class="kw">namespace</span> std;

<span class="kw">int</span> <b>main</b>(<span class="kw">int</span> argc, <span class="kw">char</span>* argv[])

{
    <span class="kw">char</span> Cadena[40];
    <span class="kw">int</span> N;
        cout &lt;&lt; <span class="st">"Introduzca una cadena :"</span>;</div>
<svg style="left:594px;top:309px" width="36" height="4"><path d="M0 1.6 L1 0.8 L2 1.6 L3 2.4 L4 1.6 L5 0.8 L6 1.6 L7 2.4 L8 1.6 L9 0.8 L10 1.6 L11 2.4 L12 1.6 L13 0.8 L14 1.6 L15 2.4 L16 1.6 L17 0.8 L18 1.6 L19 2.4 L20 1.6 L21 0.8 L22 1.6 L23 2.4 L24 1.6 L25 0.8 L26 1.6 L27 2.4 L28 1.6 L29 0.8 L30 1.6 L31 2.4 L32 1.6 L33 0.8 L34 1.6 L35 2.4 L36 1.6" fill="none" stroke="#9a9a9a" stroke-width="0.8"/></svg>
<svg style="left:702px;top:309px" width="36" height="4"><path d="M0 1.6 L1 0.8 L2 1.6 L3 2.4 L4 1.6 L5 0.8 L6 1.6 L7 2.4 L8 1.6 L9 0.8 L10 1.6 L11 2.4 L12 1.6 L13 0.8 L14 1.6 L15 2.4 L16 1.6 L17 0.8 L18 1.6 L19 2.4 L20 1.6 L21 0.8 L22 1.6 L23 2.4 L24 1.6 L25 0.8 L26 1.6 L27 2.4 L28 1.6 L29 0.8 L30 1.6 L31 2.4 L32 1.6 L33 0.8 L34 1.6 L35 2.4 L36 1.6" fill="none" stroke="#9a9a9a" stroke-width="0.8"/></svg>

<!-- ===== output ===== -->
<div class="a" style="left:4px;top:405px;width:1351px;height:260px;background:#e8e8e7;border:1px solid #c0c0bd;border-right:none"></div>
<div class="a" style="left:5px;top:406px;width:1350px;height:29px;background:#fff"></div>
<div class="a" style="left:11.5px;top:410.5px;font-size:14.8px;line-height:18px;color:#2e3436">Output</div>
<svg style="left:1321px;top:416px" width="10" height="10"><path d="M1 1L8 8M8 1L1 8" stroke="#2e3436" stroke-width="1.5"/></svg>
<svg style="left:1338px;top:416px" width="10" height="10"><circle cx="5" cy="5" r="3.3" fill="#2e3436"/></svg>
<!-- output side icons -->
<svg style="left:10px;top:441px" width="16" height="16"><rect x="1" y="1" width="13" height="13" fill="#d8b8b8" stroke="#b89898"/><rect x="5" y="5" width="5" height="5" fill="#e8d8d8"/></svg>
<svg style="left:9px;top:466px" width="18" height="16"><path d="M1.5 1.5l7 6.5-7 6.5z M8.5 1.5l7 6.5-7 6.5z" fill="#b0e890" stroke="#2a9a14" stroke-width="1.4"/></svg>
<svg style="left:9px;top:492px" width="18" height="16"><path d="M1.5 1.5l7 6.5-7 6.5z M8.5 1.5l7 6.5-7 6.5z" fill="#f0f0a0" stroke="#a8a830" stroke-width="1.4"/></svg>
<svg style="left:9px;top:517px" width="18" height="18"><rect x="1" y="0.8" width="16" height="16" rx="2.5" fill="#d0d0d0" stroke="#707070" stroke-width="1"/><rect x="3" y="3" width="12" height="11.5" rx="1" fill="#1e1e1e"/><rect x="3" y="3" width="12" height="3" fill="#3a3a3a"/><path d="M4.5 7.5l3 1.8-3 1.8" stroke="#e8e8e8" stroke-width="1" fill="none"/><path d="M8 12h5" stroke="#e8e8e8" stroke-width="1"/></svg>
<svg style="left:9px;top:543px" width="18" height="18"><path d="M1.5 2.5h6v14h-6z" fill="#dcdcdc" stroke="#a8a8a8"/><path d="M3 5h3M3 7h3" stroke="#b0b0b0"/><circle cx="4.5" cy="10.5" r="1.5" fill="#e0a0a0"/><path d="M9.5 16.5v-11a3 3 0 0 1 6 0v9a2 2 0 0 1-4 0v-7" fill="none" stroke="#a8a8a8" stroke-width="1.6"/></svg>
<!-- output tabs -->
<div class="a" style="left:36px;top:437px;width:227px;height:33px;background:#ebebea;border:1px solid #bdbdbb;border-bottom:none;border-radius:3px 3px 0 0"></div>
<div class="a" style="left:45px;top:447px;font-size:14px;line-height:18px;color:#2e3436">ejem_1_cin_array (Build, Run)</div>
<svg style="left:243px;top:451px" width="10" height="10"><path d="M1 1L8 8M8 1L1 8" stroke="#2e3436" stroke-width="1.5"/></svg>
<div class="a" style="left:263px;top:437px;width:183px;height:33px;background:#fafafa;border:1px solid #bdbdbb;border-bottom:none;border-radius:3px 3px 0 0"></div>
<div class="a" style="left:272px;top:447px;font-size:14px;line-height:18px;color:#2e3436">ejem_1_cin_array (Run)</div>
<svg style="left:426.5px;top:451px" width="10" height="10"><path d="M1 1L8 8M8 1L1 8" stroke="#2e3436" stroke-width="1.5"/></svg>
<!-- output text area -->
<div class="a" style="left:36px;top:469px;width:1314px;height:193px;background:#e8e8e7;border:1px solid #b6b6b3"></div>
<div class="a" style="left:37px;top:470px;width:4px;height:191px;background:#fff"></div>
<div class="a" style="left:37px;top:659px;width:1312px;height:2px;background:#fff"></div>
<div class="a" style="left:1345px;top:470px;width:4px;height:191px;background:#fff"></div>
<div class="a" style="left:1332px;top:470px;width:13px;height:189px;background:#c2c2c0"></div>
<div class="a" style="left:1336px;top:474px;width:6px;height:182px;background:#7b7f7f;border-radius:3px"></div>
<div class="a out" style="left:41px;top:473px">Introduzca una cadena :Miguel Santos Montoya


Miguel Santos Montoya
Introduzca un numero :123456789

Su representacion es :123456789
<span style="color:#0e8c0e">RUN FINISHED; exit value 0; real time: 20s; user: 0ms; system: 0ms</span></div>
<div class="a" style="left:41px;top:615px;width:9px;height:18px;background:#000"></div>

<!-- ===== status bar ===== -->
<svg style="left:7px;top:676px" width="15" height="12"><rect x="5.5" y="1.5" width="8" height="6" fill="#f4f4f4" stroke="#1e2428" stroke-width="1.2"/><rect x="5" y="1" width="9" height="2.2" fill="#1e2428"/><rect x="1.5" y="4.5" width="8" height="6" fill="#f4f4f4" stroke="#1e2428" stroke-width="1.2"/><rect x="1" y="4" width="9" height="2.2" fill="#1e2428"/></svg>
<div class="a" style="left:28px;top:671px;width:73px;height:21px;background:#dcdcdb;border:1px solid #c4c4c2;border-radius:4px"></div>
<svg style="left:31px;top:673px" width="18" height="17"><rect x="1.5" y="1.5" width="14" height="12" fill="#e4ecf4" stroke="#5a7088" stroke-width="1"/><rect x="2" y="2" width="13" height="2.5" fill="#90a8c0"/><path d="M12 3.2h2M9 3.2h2" stroke="#fff" stroke-width="0.8"/><path d="M6.5 6.5 L8.5 9 Q10 8.2 12 8.2 Q16 8.2 16 11.5 Q16 14.8 12 14.8 Q8 14.8 7.8 11.8z" fill="#ebb868" stroke="#b07828" stroke-width="1"/><path d="M10 11.5h4" stroke="#fff4dc" stroke-width="1"/></svg>
<div class="a" style="left:52px;top:672px;font-size:14.6px;line-height:18px;color:#1a1a1a">Output</div>
<svg style="left:1051px;top:674px" width="18" height="18"><path d="M6 1.2 H12 Q16.5 1.2 16.5 6.5 Q16.5 13.5 12 13.5 L13.5 16.5 L10 13.5 H6 Q1.5 13.5 1.5 7.5 Q1.5 1.2 6 1.2z" fill="#e6eef5" stroke="#56636e" stroke-width="1.2" stroke-linejoin="round"/><path d="M7 5.2 L9 4.2 V10.5 M7 10.8 H11" stroke="#000" stroke-width="1.5" fill="none"/></svg>
<div class="a sep" style="left:1072px;top:674px;height:18px"></div>
<div class="a" style="left:1130px;top:673px;font-size:14px;line-height:18px;color:#2e3436">25:1</div>
<div class="a sep" style="left:1216px;top:674px;height:17px"></div>
<div class="a" style="left:1220px;top:673px;font-size:14px;line-height:18px;color:#2e3436">INS</div>
<div class="a sep" style="left:1248px;top:674px;height:17px"></div>
</body></html>
